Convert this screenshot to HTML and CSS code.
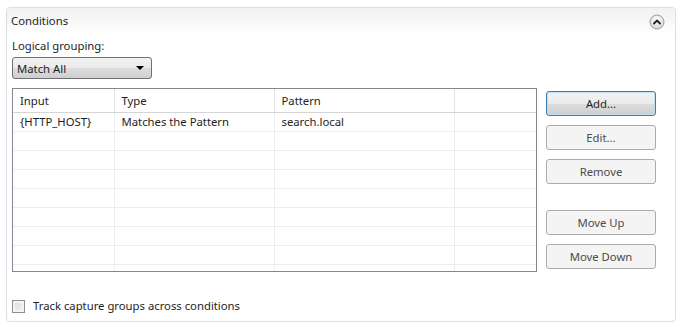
FILE: index.html
```html
<!DOCTYPE html>
<html>
<head>
<meta charset="utf-8">
<link rel="stylesheet" href="styles.css">
</head>
<body>
<div class="panel">
  <div class="panel-header">
    <span class="title">Conditions</span>
    <svg class="collapse" width="16" height="16" viewBox="0 0 16 16">
      <defs>
        <radialGradient id="cg" cx="50%" cy="35%" r="65%">
          <stop offset="0" stop-color="#ffffff"/>
          <stop offset="1" stop-color="#d4d4d4"/>
        </radialGradient>
      </defs>
      <circle cx="8" cy="8" r="7" fill="url(#cg)" stroke="#9a9a9a" stroke-width="1"/>
      <path d="M5 9.5 L8 6.5 L11 9.5" fill="none" stroke="#202020" stroke-width="1.8" stroke-linecap="round" stroke-linejoin="round"/>
    </svg>
  </div>
  <div class="panel-body">
    <div class="label">Logical grouping:</div>
    <div class="select">
      <span>Match All</span>
      <span class="arrow"></span>
    </div>
    <div class="main">
      <div class="grid">
        <table>
          <colgroup>
            <col class="c1"><col class="c2"><col class="c3"><col class="c4">
          </colgroup>
          <thead>
            <tr><th>Input</th><th>Type</th><th>Pattern</th><th></th></tr>
          </thead>
          <tbody>
            <tr><td>{HTTP_HOST}</td><td>Matches the Pattern</td><td>search.local</td><td></td></tr>
            <tr><td></td><td></td><td></td><td></td></tr>
            <tr><td></td><td></td><td></td><td></td></tr>
            <tr><td></td><td></td><td></td><td></td></tr>
            <tr><td></td><td></td><td></td><td></td></tr>
            <tr><td></td><td></td><td></td><td></td></tr>
            <tr><td></td><td></td><td></td><td></td></tr>
            <tr><td></td><td></td><td></td><td></td></tr>
            <tr><td></td><td></td><td></td><td></td></tr>
          </tbody>
        </table>
      </div>
      <div class="buttons">
        <button class="btn default">Add...</button>
        <button class="btn">Edit...</button>
        <button class="btn">Remove</button>
        <button class="btn gap">Move Up</button>
        <button class="btn">Move Down</button>
      </div>
    </div>
    <label class="check">
      <span class="box"></span>
      <span>Track capture groups across conditions</span>
    </label>
  </div>
</div>
</body>
</html>
```

FILE: styles.css
```css
* { box-sizing: border-box; }
body {
  margin: 0;
  background: #ffffff;
  font-family: "Noto Sans", "Open Sans", sans-serif;
  font-size: 11.3px;
  color: #1e1e1e;
}
.panel {
  margin: 7px 0 0 6px;
  width: 670px;
  height: 315px;
  border: 1px solid #d9dee2;
  border-radius: 4px;
  background: #ffffff;
}
.panel-header {
  height: 26px;
  display: flex;
  align-items: center;
  justify-content: space-between;
  padding: 0 10px 0 4px;
  background: linear-gradient(to bottom, #f1f1f1 0%, #f7f7f7 50%, #ffffff 100%);
  border-radius: 4px 4px 0 0;
}
.title { line-height: 16px; }
.collapse { display: block; margin-top: 1px; }
.panel-body {
  padding: 4px 0 0 5px;
}
.label {
  line-height: 16px;
  height: 16px;
}
.select {
  margin-top: 3px;
  width: 140px;
  height: 22px;
  border: 1px solid #707070;
  border-radius: 3px;
  background: linear-gradient(to bottom, #f2f2f2 0%, #ebebeb 50%, #dddddd 51%, #cfcfcf 100%);
  display: flex;
  align-items: center;
  justify-content: space-between;
  padding: 0 7px 0 4px;
}
.arrow {
  width: 0;
  height: 0;
  border-left: 4px solid transparent;
  border-right: 4px solid transparent;
  border-top: 4px solid #000000;
}
.main {
  margin-top: 9px;
  display: flex;
  align-items: flex-start;
  gap: 9px;
}
.grid {
  width: 525px;
  height: 184px;
  border: 1px solid #828790;
  overflow: hidden;
  background: #ffffff;
}
table {
  border-collapse: collapse;
  table-layout: fixed;
  width: 523px;
}
.c1 { width: 101px; }
.c2 { width: 160px; }
.c3 { width: 180px; }
.c4 { width: 82px; }
th, td {
  padding: 0 7px;
  text-align: left;
  font-weight: normal;
  white-space: nowrap;
}
th {
  height: 23px;
  border-right: 1px solid #e3e3e3;
  border-bottom: 1px solid #d5d5d5;
  background: #ffffff;
}
th:last-child { border-right: none; }
td {
  height: 19px;
  border-right: 1px solid #ededed;
  border-bottom: 1px solid #ededed;
}
td:last-child { border-right: none; }
.buttons {
  margin-top: 3px;
  width: 110px;
  display: flex;
  flex-direction: column;
  gap: 9px;
}
.btn {
  font: inherit;
  height: 25px;
  width: 110px;
  border: 1px solid #acacac;
  border-radius: 3px;
  background: #f4f4f4;
  color: #4c4c4c;
  padding: 0;
}
.btn.default {
  border-color: #3c7fb1;
  background: linear-gradient(to bottom, #f3f3f3 0%, #ebebeb 50%, #dddddd 51%, #cfcfcf 100%);
  color: #1e1e1e;
  box-shadow: inset 0 0 0 1px #c2e0f2;
}
.btn.gap { margin-top: 17px; }
.check {
  margin-top: 26px;
  display: flex;
  align-items: center;
  gap: 8px;
  line-height: 16px;
}
.box {
  width: 13px;
  height: 13px;
  border: 1px solid #8e8f8f;
  background: linear-gradient(135deg, #dcdcdc 0%, #f2f2f2 100%);
  box-shadow: inset 0 0 0 2px #f4f4f4;
}
```
